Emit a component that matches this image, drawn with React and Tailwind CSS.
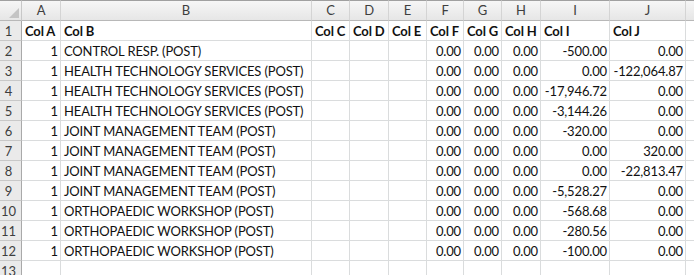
import React from "react";

const cols = ["A","B","C","D","E","F","G","H","I","J"];
const widths = "grid-cols-[22px_39px_251px_38px_39px_38px_37px_38px_39px_69px_76px_1fr]";

const data = [
  ["Col A","Col B","Col C","Col D","Col E","Col F","Col G","Col H","Col I","Col J"],
  ["1","CONTROL RESP. (POST)","","","","0.00","0.00","0.00","-500.00","0.00"],
  ["1","HEALTH TECHNOLOGY SERVICES (POST)","","","","0.00","0.00","0.00","0.00","-122,064.87"],
  ["1","HEALTH TECHNOLOGY SERVICES (POST)","","","","0.00","0.00","0.00","-17,946.72","0.00"],
  ["1","HEALTH TECHNOLOGY SERVICES (POST)","","","","0.00","0.00","0.00","-3,144.26","0.00"],
  ["1","JOINT MANAGEMENT TEAM (POST)","","","","0.00","0.00","0.00","-320.00","0.00"],
  ["1","JOINT MANAGEMENT TEAM (POST)","","","","0.00","0.00","0.00","0.00","320.00"],
  ["1","JOINT MANAGEMENT TEAM (POST)","","","","0.00","0.00","0.00","0.00","-22,813.47"],
  ["1","JOINT MANAGEMENT TEAM (POST)","","","","0.00","0.00","0.00","-5,528.27","0.00"],
  ["1","ORTHOPAEDIC WORKSHOP (POST)","","","","0.00","0.00","0.00","-568.68","0.00"],
  ["1","ORTHOPAEDIC WORKSHOP (POST)","","","","0.00","0.00","0.00","-280.56","0.00"],
  ["1","ORTHOPAEDIC WORKSHOP (POST)","","","","0.00","0.00","0.00","-100.00","0.00"],
  ["","","","","","","","","",""],
];

export default function App() {
  return (
    <div className="w-[694px] h-[275px] overflow-hidden bg-white text-[13px] leading-none tracking-[-0.15px] text-[#111]" style={{ fontFamily: "Lato, 'Open Sans', sans-serif" }}>
      <div className={`grid ${widths}`}>
        {/* header row */}
        <div className="relative h-[21px] border-t border-t-[#a0a0a0] border-b border-b-[#b8b8b8] border-r border-r-[#c8c8c8] bg-gradient-to-b from-[#f6f6f6] to-[#e6e6e6]">
          <svg className="absolute right-[2px] bottom-[2px]" width="10" height="10" viewBox="0 0 10 10">
            <polygon points="10,0 10,10 0,10" fill="#c4c4c4" />
          </svg>
        </div>
        {cols.map((c) => (
          <div key={c} className="h-[21px] flex items-end justify-center pb-[3px] border-t border-t-[#a0a0a0] border-b border-b-[#b8b8b8] border-r border-r-[#d4d4d4] bg-gradient-to-b from-[#f6f6f6] to-[#e6e6e6] text-[#3e3e3e]">
            {c}
          </div>
        ))}
        <div className="h-[21px] border-t border-t-[#a0a0a0] border-b border-b-[#b8b8b8] bg-gradient-to-b from-[#f6f6f6] to-[#e6e6e6]" />
        {data.map((row, r) => (
          <React.Fragment key={r}>
            <div className="h-[20px] flex items-end justify-center pr-[4px] pb-[2px] border-b border-b-[#c8c8c8] border-r border-r-[#a9a9a9] bg-[#eaeaea] text-[#3e3e3e]">
              {r + 1}
            </div>
            {row.map((v, c) => {
              const isHeader = r === 0;
              const left = isHeader || c === 1;
              return (
                <div
                  key={c}
                  className={`h-[20px] flex items-end pb-[2px] border-b border-r border-[#dadcdd] whitespace-nowrap ${left ? "justify-start pl-[3px]" : "justify-end pr-[2px]"} ${isHeader ? "font-bold" : ""}`}
                >
                  {v}
                </div>
              );
            })}
            <div className="h-[20px] border-b border-[#dadcdd]" />
          </React.Fragment>
        ))}
      </div>
    </div>
  );
}
